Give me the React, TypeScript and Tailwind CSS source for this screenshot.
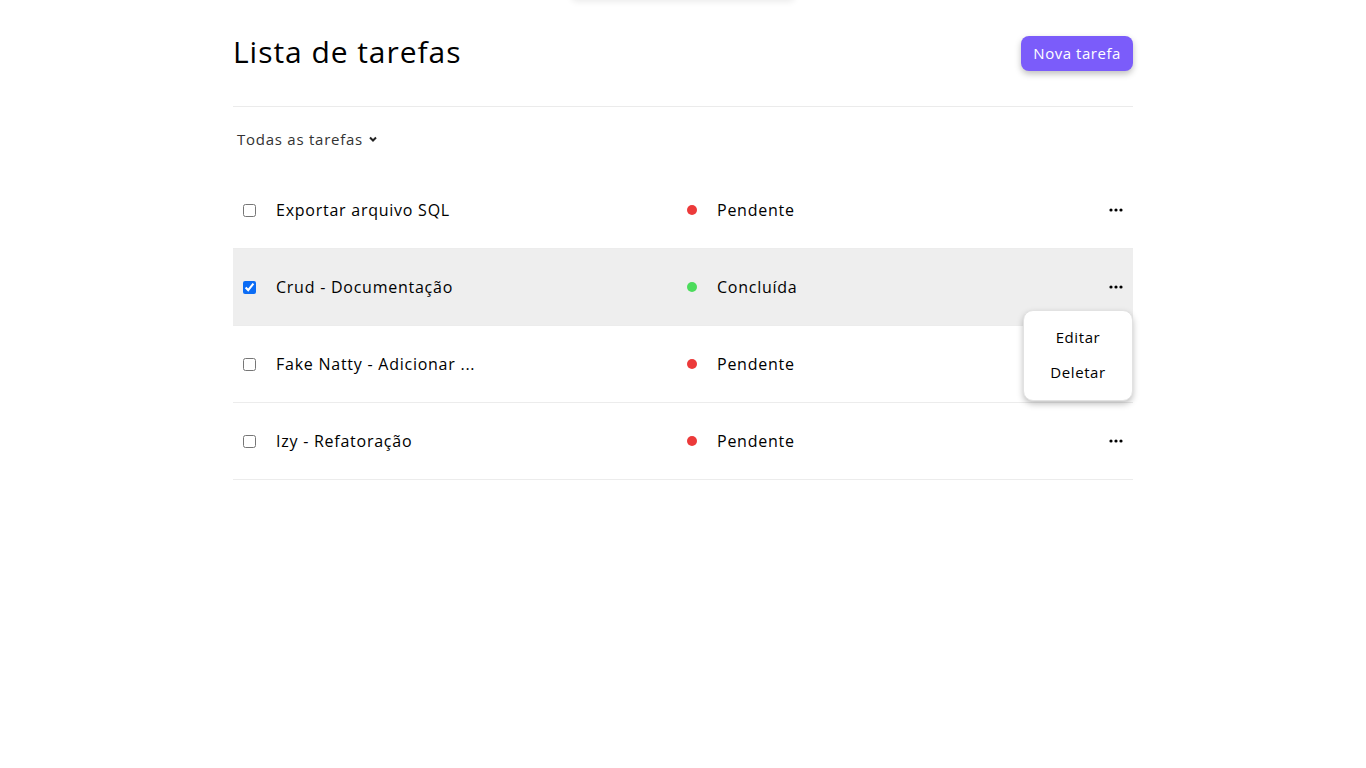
import React from 'react';

type Task = { id: number; title: string; done: boolean };

const tasks: Task[] = [
  { id: 1, title: 'Exportar arquivo SQL', done: false },
  { id: 2, title: 'Crud - Documentação', done: true },
  { id: 3, title: 'Fake Natty - Adicionar ...', done: false },
  { id: 4, title: 'Izy - Refatoração', done: false },
];

const Dots = () => (
  <svg width="14" height="4" viewBox="0 0 14 4" fill="#000">
    <circle cx="2" cy="2" r="1.6" />
    <circle cx="7" cy="2" r="1.6" />
    <circle cx="12" cy="2" r="1.6" />
  </svg>
);

const App: React.FC = () => {
  return (
    <div className="min-h-screen bg-white text-black" style={{ fontFamily: '"Open Sans", sans-serif' }}>
      {/* faint toast shadow at the top */}
      <div className="absolute left-[571px] top-[-40px] h-[40px] w-[224px] rounded-md bg-white shadow-[0_2px_6px_rgba(0,0,0,0.08)]" />

      <div className="mx-auto w-[900px]">
        <header className="flex h-[107px] items-center justify-between border-b border-[#ebebeb]">
          <h1 className="mb-[4px] text-[30px] font-normal tracking-[0.95px]">Lista de tarefas</h1>
          <button className="h-[35px] rounded-lg bg-[#7b5cfa] px-[12px] text-[15px] tracking-[0.55px] text-white shadow-[0_3px_6px_rgba(0,0,0,0.25)]">
            Nova tarefa
          </button>
        </header>

        <div className="flex h-[65px] items-center gap-[5px] pl-1 pb-[1px] text-[15px] tracking-[0.75px] text-[#333]">
          Todas as tarefas
          <svg width="10" height="10" viewBox="0 0 10 10" fill="none" stroke="#222" strokeWidth="2">
            <path d="M2 3.5l3 3 3-3" />
          </svg>
        </div>

        <ul>
          {tasks.map((t) => (
            <li
              key={t.id}
              className={`relative flex h-[77px] items-center border-b border-[#ececec] ${t.done ? 'bg-[#eeeeee]' : 'bg-white'}`}
            >
              <input type="checkbox" defaultChecked={t.done} className="ml-[10px] h-[13px] w-[13px] accent-[#0b6cf5]" />
              <span className="ml-[20px] w-[411px] text-[16px] tracking-[0.75px]">{t.title}</span>
              <span className={`h-[10px] w-[10px] rounded-full ${t.done ? 'bg-[#4cdc5c]' : 'bg-[#ec3a3a]'}`} />
              <span className="ml-[15px] flex-1 pl-[5px] text-[16px] tracking-[0.75px]">{t.done ? 'Concluída' : 'Pendente'}</span>
              <button className="mr-[5px] flex h-6 w-6 items-center justify-center">
                <Dots />
              </button>
              {t.done && (
                <div className="absolute right-0 top-[61px] z-10 flex w-[110px] flex-col items-center gap-[12px] rounded-[10px] border border-[#e2e2e2] bg-white pt-[15px] pb-[17px] text-[15px] tracking-[0.6px] shadow-[0_3px_6px_rgba(0,0,0,0.25)]">
                  <span>Editar</span>
                  <span>Deletar</span>
                </div>
              )}
            </li>
          ))}
        </ul>
      </div>
    </div>
  );
};

export default App;
